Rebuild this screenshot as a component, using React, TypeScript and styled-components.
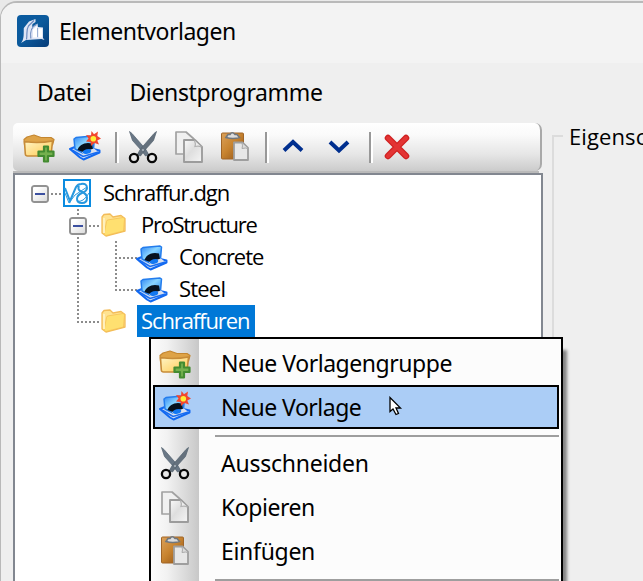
import React from "react";
import styled, { createGlobalStyle, css } from "styled-components";

const Global = createGlobalStyle`
  *, *::before, *::after { box-sizing: border-box; }
  body { margin: 0; overflow: hidden; background: #e9e9e9; }
`;

const uiFont = `"Noto Sans", "Open Sans", sans-serif`;
const treeFont = `"Open Sans", "Noto Sans", sans-serif`;

const Window = styled.div`
  position: relative;
  display: flex;
  flex-direction: column;
  width: 643px;
  height: 580px;
  margin-top: 1px;
  overflow: hidden;
  border: solid #b9b9b9;
  border-width: 2px 0 0 1px;
  border-radius: 17px 0 0 0;
  background: #efefef;
  color: #000;
  font-family: ${uiFont};
  font-size: 23px;
  white-space: nowrap;
`;

const TitleBar = styled.header`
  display: flex;
  align-items: center;
  gap: 10px;
  height: 60px;
  padding: 0 0 4px 16px;
  background: #f3f3f3;
`;

const Text = styled.span<{ $spacing?: number }>`
  padding-bottom: 1px;
  letter-spacing: ${(p) => p.$spacing ?? 0}px;
`;

const MenuBar = styled.nav`
  display: flex;
  align-items: center;
  gap: 38px;
  height: 60px;
  padding: 0 0 1px 36px;
`;

const Content = styled.main`
  display: flex;
  flex: 1;
  gap: 9px;
  padding-left: 12px;
`;

const TreePane = styled.section`
  display: flex;
  flex-direction: column;
  width: 530px;
`;

const ToolBar = styled.div`
  display: flex;
  align-items: center;
  width: 529px;
  height: 48px;
  padding: 0 0 0 10px;
  border-radius: 5px 7px 7px 5px;
  border-right: 2px solid #a9a9a9;
  background: linear-gradient(#fff 0%, #fafafa 25%, #e6e6e6 65%, #cbcbcb 100%);
`;

const ToolEdge = styled.div`
  width: 526px;
  height: 2px;
  background: #bababa;
`;

const ToolButton = styled.span`
  display: flex;
  align-items: center;
  justify-content: center;
  width: 46px;
  padding-right: 14px;
  height: 34px;
`;

const ToolDivider = styled.span`
  width: 4px;
  height: 31px;
  margin-right: 8px;
  border-left: 2px solid #989898;
  border-right: 2px solid #fff;
`;

const Tree = styled.div`
  flex: 1;
  padding: 2px 0 0 6px;
  border: 2px solid #828790;
  border-bottom: 0;
  background: #fff;
  font-family: ${treeFont};
  font-size: 22px;
`;

const TreeRow = styled.div`
  display: flex;
  align-items: center;
  height: 32px;
`;

type GuideKind = "blank" | "root" | "box" | "through" | "tee" | "corner";

const Guide = styled.span<{ $kind: GuideKind }>`
  position: relative;
  display: flex;
  align-items: center;
  justify-content: center;
  flex: none;
  width: 38px;
  height: 32px;
  ${(p) =>
    p.$kind !== "blank" &&
    p.$kind !== "root" &&
    css`
      &::before {
        content: "";
        position: absolute;
        left: 18px;
        top: 0;
        width: 2px;
        height: ${p.$kind === "corner" ? 16 : 32}px;
        background: repeating-linear-gradient(#8c8c8c 0 2px, transparent 2px 4px);
      }
    `}
  ${(p) =>
    p.$kind !== "blank" &&
    p.$kind !== "through" &&
    css`
      &::after {
        content: "";
        position: absolute;
        left: 18px;
        top: 16px;
        width: 24px;
        height: 2px;
        background: repeating-linear-gradient(90deg, #8c8c8c 0 2px, transparent 2px 4px);
      }
    `}
`;

const Expander = styled.span`
  position: relative;
  z-index: 1;
  display: flex;
  align-items: center;
  justify-content: center;
  width: 18px;
  height: 18px;
  margin-top: 2px;
  border: 2px solid #929292;
  border-radius: 3px;
  background: linear-gradient(135deg, #fff 20%, #dcdcdc);
  outline: 2px solid #fff;
  &::after {
    content: "";
    width: 10px;
    height: 2px;
    background: #3c50a0;
  }
`;

const TreeIcon = styled.span<{ $indent: number }>`
  position: relative;
  display: flex;
  width: 40px;
  padding-left: ${(p) => p.$indent}px;
`;

const TreeLabel = styled.span<{ $selected?: boolean; $spacing: number }>`
  height: 32px;
  padding: 0 4px;
  line-height: 30px;
  letter-spacing: ${(p) => p.$spacing}px;
  ${(p) =>
    p.$selected &&
    css`
      width: 118px;
      background: #0078d7;
      color: #fff;
    `}
`;

const GroupBox = styled.fieldset`
  flex: 1;
  margin: -3px 0 0 0;
  padding: 0;
  border: 2px solid #dcdcdc;
  border-width: 2px 0 0 2px;
  min-width: 0;
`;

const Legend = styled.legend`
  margin-left: 9px;
  padding: 0 0 0 6px;
  font-family: ${treeFont};
  font-size: 22px;
  line-height: 32px;
  letter-spacing: 0.1px;
`;

const ContextMenu = styled.div`
  position: absolute;
  left: 148px;
  top: 334px;
  z-index: 3;
  width: 414px;
  height: 270px;
  padding: 2px;
  border: 2px solid #000;
  background: linear-gradient(90deg, #fcfcfc 0, #f2f2f2 16px, #c8c8c8 48px, #fcfcfc 48px);
  box-shadow: 5px 12px 3px -1px rgba(0, 0, 0, 0.45);
`;

const MenuItem = styled.div<{ $active?: boolean }>`
  display: flex;
  align-items: center;
  height: 44px;
  padding-left: 4px;
  border: 2px solid ${(p) => (p.$active ? "#000" : "transparent")};
  background: ${(p) => (p.$active ? "#abcdf6" : "transparent")};
`;

const MenuIcon = styled.span`
  display: flex;
  justify-content: center;
  width: 32px;
  margin-right: 30px;
`;

const MenuDivider = styled.div`
  height: 2px;
  margin: 6px 0 4px 62px;
  background: #9e9e9e;
`;

const Pointer = styled.svg`
  position: absolute;
  left: 387px;
  top: 393px;
  z-index: 4;
`;

const AppLogo = () => (
  <svg width="32" height="32" viewBox="0 0 32 32">
    <defs>
      <linearGradient id="logo" x1="0" y1="0" x2="1" y2="1">
        <stop offset="0" stopColor="#0a5ba0" />
        <stop offset="0.5" stopColor="#0c5a9c" />
        <stop offset="1" stopColor="#073c78" />
      </linearGradient>
    </defs>
    <rect width="32" height="32" rx="4" fill="url(#logo)" />
    <path d="M4 28C7.500 24 6.500 18 6.800 13L12 6.500 18.500 4V7L15.500 9 15 12 20.500 8.500 21 12 26 12.500V23L27.500 25 24.500 24 17 24.500 9 25z" fill="#dfe5f5" />
    <path d="M9.500 24.500C10.500 18 9 15 11.500 11L17 5.500M13.800 23.500C13 17 13.500 12 19.500 9.500M20 13V22" fill="none" stroke="#6e8cbf" strokeWidth="1.200" />
    <path d="M16 14.500 20 11V22.500H16zM21.500 13.500H25V22.500H21.500z" fill="#fff" />
  </svg>
);

const FolderAdd = () => (
  <svg width="32" height="32" viewBox="0 0 32 32">
    <defs>
      <linearGradient id="fold" x1="0" y1="0" x2="1" y2="1">
        <stop offset="0" stopColor="#fff5c7" />
        <stop offset="1" stopColor="#ffc94f" />
      </linearGradient>
    </defs>
    <path d="M1 8.500 4 6 11 4 18 6.500H28L31 8.500 29.500 14H1.500z" fill="#dea347" stroke="#c4862f" strokeWidth="1.200" strokeLinejoin="round" />
    <path d="M3 10.800Q16 12.500 29.500 10L28 25H4.500Q2.500 25 2.300 23L1.500 11z" fill="url(#fold)" stroke="#c78c39" strokeWidth="1.600" />
    <path d="M21 15.500H25V20.500H30.500V25H25V30.500H21V25H15.500V20.500H21z" fill="#74b04e" stroke="#438b31" strokeWidth="2.200" strokeLinejoin="round" />
  </svg>
);

const Template = ({ isNew = false }: { isNew?: boolean }) => (
  <svg width="32" height="32" viewBox="0 0 32 32">
    <defs>
      <linearGradient id="screen" x1="0" y1="0" x2="1" y2="1">
        <stop offset="0" stopColor="#2c83f4" />
        <stop offset="0.45" stopColor="#8ad5ff" />
        <stop offset="1" stopColor="#1478ed" />
      </linearGradient>
    </defs>
    <path d="M1 18 7 15.500 20 17 30.500 19.500V21.500L14.500 28.500 11 26.500z" fill="#cfddf3" stroke="#1269f1" strokeWidth="2" strokeLinejoin="round" />
    <path d="M5 8 7 6.500 24 5 25.500 6 24.500 18 14 22 6 18z" fill="url(#screen)" stroke="#237ced" strokeWidth="1.500" strokeLinejoin="round" />
    <path d="M8.500 19C10 14 16 10.500 23 12.500L24 18.500 14 21z" fill="#07121e" />
    <path d="M13 21 25 17.500 28 20 15.500 25z" fill="#d8e0ef" />
    <ellipse cx="18" cy="20.500" rx="4.300" ry="2.300" transform="rotate(-15 18 20.500)" fill="#1478f1" />
    <path d="M3 19 14 25.500 29.500 21" fill="none" stroke="#176cf1" strokeWidth="1.500" />
    {isNew && (
      <g>
        <path d="M22.500 0 25 3.200 29 .5 28.300 5 32 7.500 28.300 9.500 30 13.500 25.500 12 22 15 21.500 11 17 10.500 19.500 7.500 17 4 22 4.500z" fill="#f2472f" />
        <circle cx="24.300" cy="7.700" r="2.800" fill="#ffee35" />
      </g>
    )}
  </svg>
);

const Scissors = () => (
  <svg width="30" height="34" viewBox="0 0 30 34">
    <path d="M1.500 1.500 4 3.500 17.500 19 21 25 17.500 26 13 20 4.500 10.500z" fill="#697785" stroke="#536170" strokeWidth="0.700" />
    <path d="M28.500 1.500 26 3.500 12.500 19 9 25 12.500 26 17 20 25.500 10.500z" fill="#65717d" stroke="#51616e" strokeWidth="0.700" />
    <circle cx="6" cy="28" r="4.100" fill="#e8e8e8" stroke="#080808" strokeWidth="2.300" />
    <circle cx="24" cy="28" r="4.100" fill="#e8e8e8" stroke="#080808" strokeWidth="2.300" />
    <circle cx="15" cy="20" r="1" fill="#aeb8c0" />
  </svg>
);

const Copy = () => (
  <svg width="30" height="34" viewBox="0 0 30 34">
    <defs>
      <linearGradient id="page" x1="0" y1="0" x2="1" y2="1">
        <stop offset="0" stopColor="#fafafa" />
        <stop offset="0.45" stopColor="#dedede" />
        <stop offset="1" stopColor="#f5f5f5" />
      </linearGradient>
    </defs>
    <path d="M2 2H12L20 9V24H2z" fill="#f0f0f0" stroke="#a1a1a1" strokeWidth="1.700" strokeLinejoin="round" />
    <path d="M10 10H21L28 17V32H10z" fill="url(#page)" stroke="#9c9c9c" strokeWidth="1.900" strokeLinejoin="round" />
    <path d="M20.500 10.500Q22 14 21 16.500Q25 15.500 27.500 17" fill="#ededed" stroke="#b2b2b2" strokeWidth="1.200" />
  </svg>
);

const Paste = () => (
  <svg width="30" height="34" viewBox="0 0 30 34">
    <defs>
      <linearGradient id="board" x1="0" y1="0" x2="1" y2="1">
        <stop offset="0" stopColor="#dba15a" />
        <stop offset="0.45" stopColor="#c88430" />
        <stop offset="1" stopColor="#8d4f14" />
      </linearGradient>
    </defs>
    <rect x="1.500" y="3" width="22" height="26" rx="1" fill="url(#board)" stroke="#a06527" />
    <path d="M6 7.500 8 4.500H10Q12 1 15 4.500H17L19.500 7.500Q13 9.500 6 7.500z" fill="#ddd" stroke="#70777e" strokeWidth="1.600" />
    <path d="M14 12.500H22.500L28 18V30H14z" fill="#e7e7e7" stroke="#9e9e9e" strokeWidth="1.800" strokeLinejoin="round" />
    <path d="M22 13Q23 16 22 18.500Q26 17.500 28 18.500" fill="#ddd" stroke="#a9a9a9" />
  </svg>
);

const Chevron = ({ up = false }: { up?: boolean }) => (
  <svg width="22" height="18" viewBox="0 0 22 18">
    <path d={up ? "M2 12.500 11 4 20 12.500" : "M2 4 11 12.500 20 4"} fill="none" stroke="#002f8f" strokeWidth="4" />
  </svg>
);

const Delete = () => (
  <svg width="26" height="26" viewBox="0 0 26 26">
    <path d="M4 4 22 22M22 4 4 22" stroke="#cf2020" strokeWidth="6.500" strokeLinecap="round" />
    <path d="M4 4 22 22M22 4 4 22" stroke="#e33434" strokeWidth="4" strokeLinecap="round" />
  </svg>
);

const Folder = () => (
  <svg width="25" height="24" viewBox="0 0 25 24">
    <path d="M1 4 3 1.500 9 1 12 4 20 2.500 24 5.500V18L5 23 1 20z" fill="#ffe391" stroke="#f3bc59" strokeWidth="1.300" strokeLinejoin="round" />
    <path d="M5.500 8.500Q5.500 7 7.500 6.800L22 4.500Q24 4.500 23.500 6.500L22.500 18 5 22.500 3 21.500z" fill="#ffe070" stroke="#f5c055" strokeWidth="0.800" />
    <path d="M3 5V20" stroke="#fff0bd" strokeWidth="2" />
  </svg>
);

const DesignFile = () => (
  <svg width="28" height="28" viewBox="0 0 28 28">
    <rect x="1" y="1" width="26" height="26" fill="#fff" stroke="#0a8be0" strokeWidth="2" />
    <g fill="none" stroke="#2898de" strokeWidth="2">
      <path d="M2 9 7 22 13 8Q15 5 18 5Q24 4 24 9Q24 12 19 14Q14 16 14 20Q14 24 19 24Q24 24 24 19Q24 15 19 13Q14 11 16 7" />
      <path d="M2 14 6 24Q9 20 12 16L24 8M14 22Q20 24 26 14" strokeWidth="1" />
    </g>
  </svg>
);

interface NodeProps {
  guides: GuideKind[];
  icon: React.ReactNode;
  indent?: number;
  label: string;
  spacing: number;
  selected?: boolean;
}

const Node = ({ guides, icon, indent = 4, label, spacing, selected }: NodeProps) => (
  <TreeRow>
    {guides.map((kind, i) => (
      <Guide key={i} $kind={kind}>
        {(kind === "box" || kind === "root") && <Expander />}
      </Guide>
    ))}
    <TreeIcon $indent={indent}>{icon}</TreeIcon>
    <TreeLabel $selected={selected} $spacing={spacing}>{label}</TreeLabel>
  </TreeRow>
);

const Item = ({ icon, label, spacing, active }: { icon: React.ReactNode; label: string; spacing: number; active?: boolean }) => (
  <MenuItem $active={active}>
    <MenuIcon>{icon}</MenuIcon>
    <Text $spacing={spacing}>{label}</Text>
  </MenuItem>
);

export default function App() {
  return (
    <>
      <Global />
      <Window>
        <TitleBar>
          <AppLogo />
          <Text $spacing={-0.48}>Elementvorlagen</Text>
        </TitleBar>
        <MenuBar>
          <Text $spacing={-0.5}>Datei</Text>
          <Text $spacing={-0.35}>Dienstprogramme</Text>
        </MenuBar>
        <Content>
          <TreePane>
            <ToolBar>
              <ToolButton><FolderAdd /></ToolButton>
              <ToolButton><Template isNew /></ToolButton>
              <ToolDivider />
              <ToolButton><Scissors /></ToolButton>
              <ToolButton><Copy /></ToolButton>
              <ToolButton><Paste /></ToolButton>
              <ToolDivider />
              <ToolButton><Chevron up /></ToolButton>
              <ToolButton><Chevron /></ToolButton>
              <ToolDivider />
              <ToolButton><Delete /></ToolButton>
            </ToolBar>
            <ToolEdge />
            <Tree>
              <Node guides={["root"]} icon={<DesignFile />} label="Schraffur.dgn" spacing={-1} />
              <Node guides={["blank", "box"]} icon={<Folder />} label="ProStructure" spacing={-1.3} />
              <Node guides={["blank", "through", "tee"]} icon={<Template />} indent={1} label="Concrete" spacing={-1.05} />
              <Node guides={["blank", "through", "corner"]} icon={<Template />} indent={1} label="Steel" spacing={-0.8} />
              <Node guides={["blank", "corner"]} icon={<Folder />} label="Schraffuren" spacing={-1.1} selected />
            </Tree>
          </TreePane>
          <GroupBox>
            <Legend>Eigensc</Legend>
          </GroupBox>
        </Content>
        <ContextMenu>
          <Item icon={<FolderAdd />} label="Neue Vorlagengruppe" spacing={-0.46} />
          <Item icon={<Template isNew />} label="Neue Vorlage" spacing={-0.5} active />
          <MenuDivider />
          <Item icon={<Scissors />} label="Ausschneiden" spacing={-0.25} />
          <Item icon={<Copy />} label="Kopieren" spacing={-0.45} />
          <Item icon={<Paste />} label="Einfügen" spacing={-0.3} />
          <MenuDivider />
        </ContextMenu>
        <Pointer width="16" height="22" viewBox="0 0 16 22">
          <path d="M2 1.500V15.500L5 13 8 18.500 10.500 17.500 8 12H12.500z" fill="#fff" stroke="#000" strokeWidth="1.300" />
        </Pointer>
      </Window>
    </>
  );
}
